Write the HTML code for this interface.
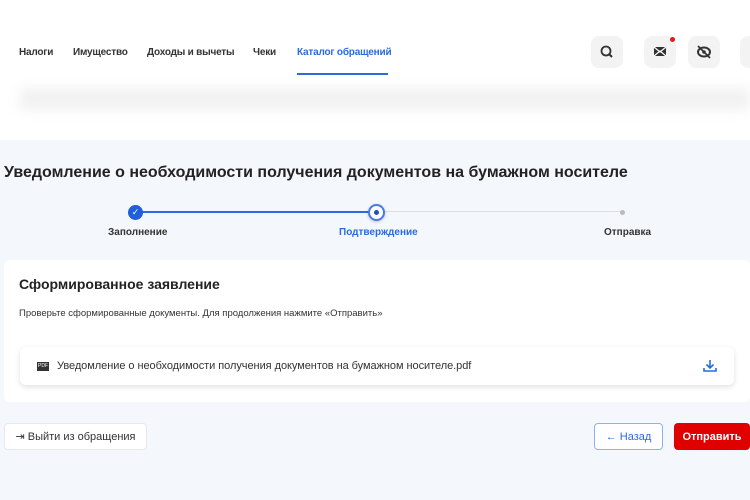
<!DOCTYPE html>
<html><head><meta charset="utf-8"><style>
*{margin:0;padding:0;box-sizing:border-box}
body{width:750px;height:500px;overflow:hidden;background:#f4f7fb;font-family:"Liberation Sans",sans-serif;position:relative;color:#222}
.top{position:absolute;left:0;top:0;width:750px;height:140px;background:#fff}
.shadow{position:absolute;left:20px;top:88px;width:730px;height:22px;background:#eee;filter:blur(6px);opacity:.8}
.nav{position:absolute;top:47px;font-size:10px;font-weight:bold;color:#333;letter-spacing:-0.2px}
.ib{position:absolute;top:36px;width:32px;height:32px;border-radius:8px;background:#f3f3f3}
h1{position:absolute;left:4px;top:164px;font-size:16px;font-weight:bold;color:#222;white-space:nowrap}
.lbl{position:absolute;top:227px;font-size:10px;font-weight:bold;color:#333}
.card{position:absolute;left:4px;top:260px;width:746px;height:142px;background:#fff;border-radius:6px}
.file{position:absolute;left:20px;top:347px;width:714px;height:38px;background:#fff;border-radius:6px;box-shadow:0 2px 6px rgba(0,0,0,.12)}
.btn{position:absolute;top:423px;height:27px;border-radius:4px;font-size:11px;display:flex;align-items:center;justify-content:center}
</style></head><body>
<div class="top"></div>
<div class="shadow"></div>
<div class="nav" style="left:19px">Налоги</div>
<div class="nav" style="left:73px">Имущество</div>
<div class="nav" style="left:147px">Доходы и вычеты</div>
<div class="nav" style="left:253px">Чеки</div>
<div class="nav" style="left:297px;color:#2b6ae0">Каталог обращений</div>
<div style="position:absolute;left:297px;top:73px;width:91px;height:2px;background:#2b6ae0"></div>
<div class="ib" style="left:591px"><svg width="32" height="32"><circle cx="15" cy="15" r="4.5" fill="none" stroke="#333" stroke-width="1.8"/><line x1="18.5" y1="18.5" x2="21" y2="21" stroke="#333" stroke-width="2"/></svg></div>
<div class="ib" style="left:644px"><svg width="32" height="32"><rect x="10" y="11" width="12" height="9" fill="#333"/><path d="M10 11L16 16L22 11M10 20L16 15L22 20" stroke="#fff" stroke-width="1.2" fill="none"/></svg></div>
<div style="position:absolute;left:670px;top:37px;width:5px;height:5px;border-radius:50%;background:#e01b1b"></div>
<div class="ib" style="left:688px"><svg width="32" height="32"><ellipse cx="16" cy="16" rx="6" ry="4.5" fill="none" stroke="#333" stroke-width="2"/><circle cx="16" cy="16" r="1.8" fill="#333"/><line x1="10" y1="10" x2="22" y2="22" stroke="#333" stroke-width="1.6"/></svg></div>
<div class="ib" style="left:740px"></div>
<h1>Уведомление о необходимости получения документов на бумажном носителе</h1>
<div style="position:absolute;left:136px;top:211px;width:240px;height:2px;background:#2b6ae0"></div>
<div style="position:absolute;left:376px;top:211px;width:246px;height:1px;background:#ddd"></div>
<div style="position:absolute;left:128px;top:205px;width:15px;height:15px;border-radius:50%;background:#1f5fdb;color:#fff;font-size:9px;text-align:center;line-height:15px">✓</div>
<div style="position:absolute;left:368px;top:204px;width:17px;height:17px;border-radius:50%;background:#fff;border:2px solid #4a7ae6;box-shadow:0 1px 3px rgba(0,0,0,.2)"><div style="margin:4px;width:5px;height:5px;border-radius:50%;background:#1f4fc8"></div></div>
<div style="position:absolute;left:620px;top:210px;width:5px;height:5px;border-radius:50%;background:#bbb"></div>
<div class="lbl" style="left:108px">Заполнение</div>
<div class="lbl" style="left:339px;color:#2b6ae0">Подтверждение</div>
<div class="lbl" style="left:604px">Отправка</div>
<div class="card"></div>
<div style="position:absolute;left:19px;top:276px;font-size:14px;font-weight:bold">Сформированное заявление</div>
<div style="position:absolute;left:19px;top:308px;font-size:9.5px;color:#333">Проверьте сформированные документы. Для продолжения нажмите «Отправить»</div>
<div class="file"></div>
<div style="position:absolute;left:37px;top:362px;width:12px;height:9px;background:#333;color:#fff;font-size:5px;text-align:center;line-height:9px">PDF</div>
<div style="position:absolute;left:57px;top:360px;font-size:11px;color:#333;letter-spacing:-0.05px">Уведомление о необходимости получения документов на бумажном носителе.pdf</div>
<svg style="position:absolute;left:702px;top:358px" width="16" height="16"><path d="M8 2V10M4.5 6.5L8 10L11.5 6.5M2 10V13H14V10" stroke="#2b6ae0" stroke-width="1.6" fill="none"/></svg>
<div class="btn" style="left:4px;width:143px;background:#fff;border:1px solid #e6e8ec;color:#333">⇥ Выйти из обращения</div>
<div class="btn" style="left:594px;width:69px;background:#fff;border:1px solid #8fb0ee;color:#2b6ae0">← Назад</div>
<div class="btn" style="left:674px;width:76px;background:#e00000;color:#fff;font-weight:bold">Отправить</div>
</body></html>
